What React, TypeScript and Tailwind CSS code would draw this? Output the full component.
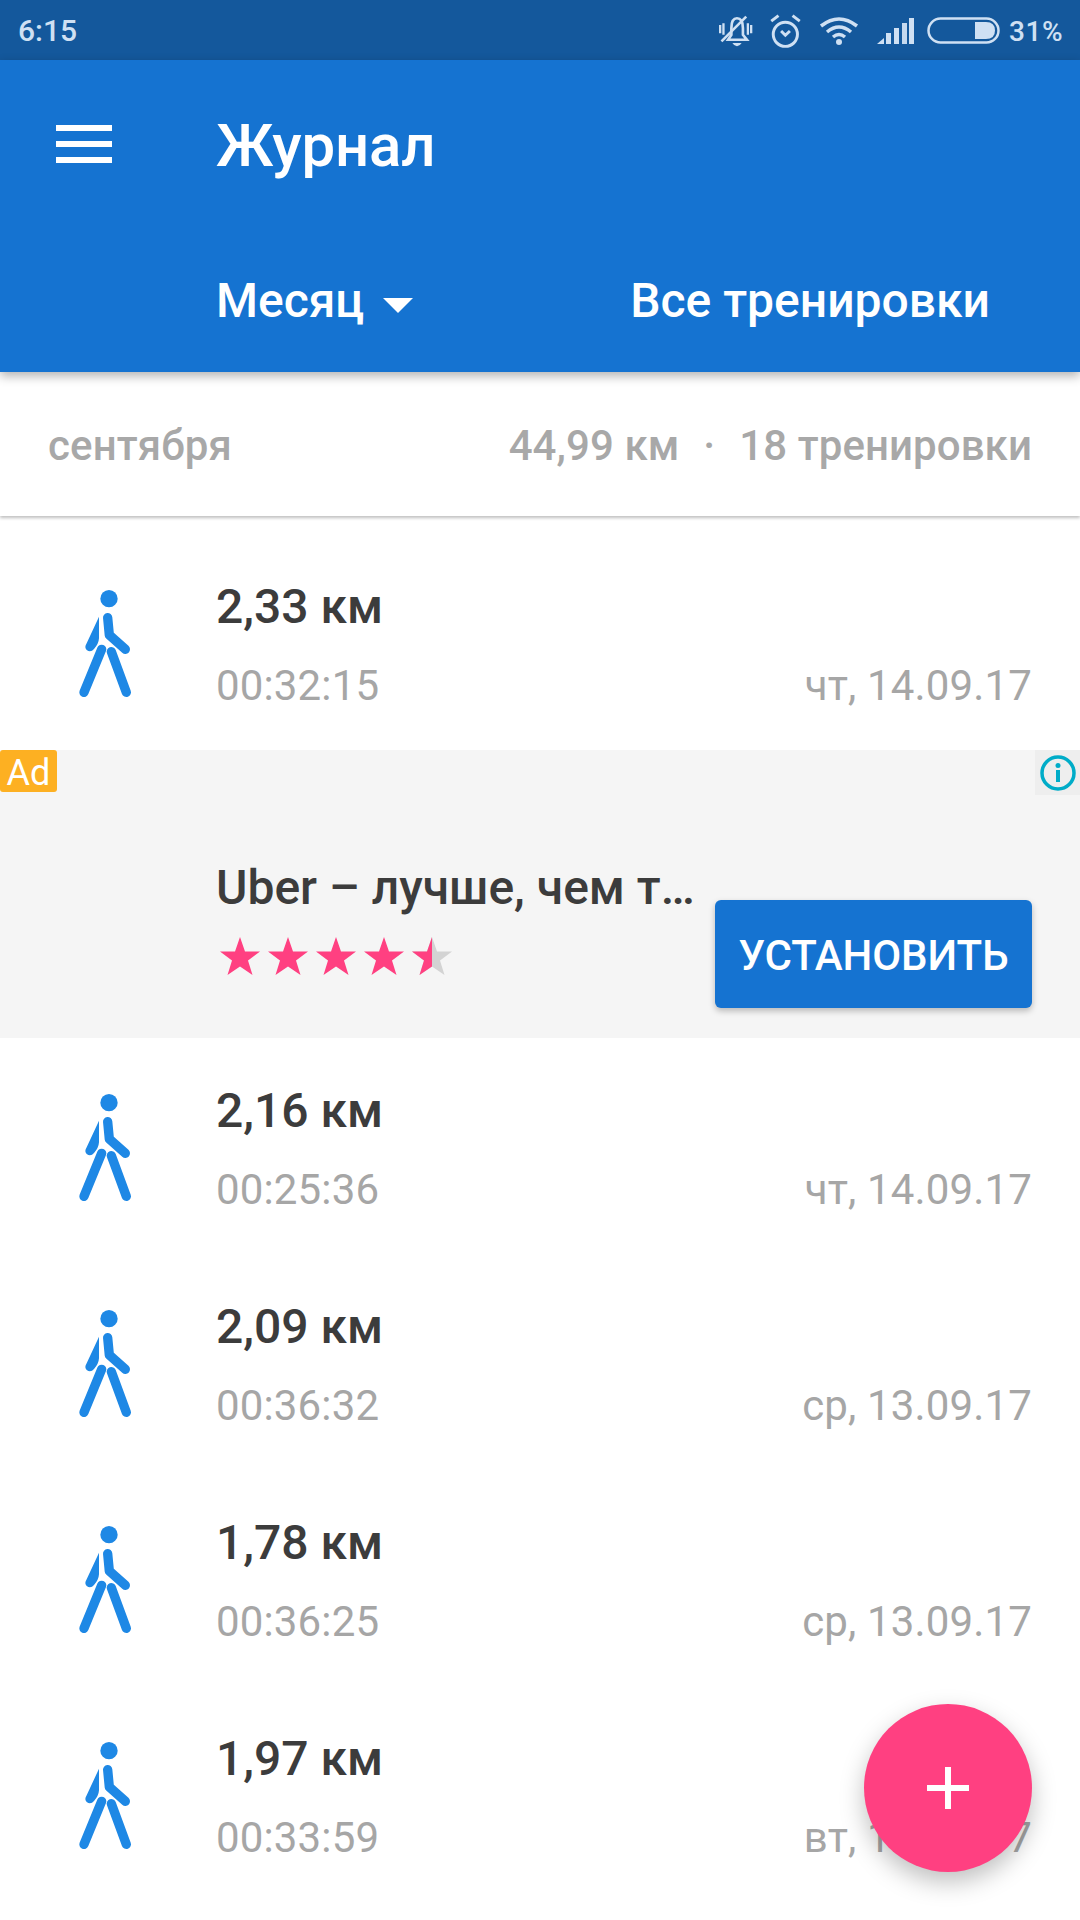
const workouts = [
  { dist: '2,16 км', time: '00:25:36', date: 'чт, 14.09.17' },
  { dist: '2,09 км', time: '00:36:32', date: 'ср, 13.09.17' },
  { dist: '1,78 км', time: '00:36:25', date: 'ср, 13.09.17' },
  { dist: '1,97 км', time: '00:33:59', date: 'вт, 12.09.17' },
]

const STAR = '20,0 25,14.5 40,14.5 28,23.5 32.5,38 20,29.5 7.5,38 12,23.5 0,14.5 15,14.5'

function WalkerIcon() {
  return (
    <svg width="120" height="140" viewBox="0 0 360 420" className="shrink-0">
      <circle cx="177" cy="86" r="26" fill="#1E88E5" />
      <path d="M173 143 L178 195 L226 238" fill="none" stroke="#1E88E5" strokeWidth="28" strokeLinecap="round" strokeLinejoin="round" />
      <path d="M147 140 L147 205 Q146 222 132 237 Q122 249 110 240 Q102 232 110 220 Z" fill="#1E88E5" />
      <path d="M155 238 L102 367" fill="none" stroke="#1E88E5" strokeWidth="28" strokeLinecap="round" />
      <path d="M184 245 L229 367" fill="none" stroke="#1E88E5" strokeWidth="28" strokeLinecap="round" />
    </svg>
  )
}

function Row({ dist, time, date }: { dist: string; time: string; date: string }) {
  return (
    <div className="flex h-[216px] items-start pl-[50px] pr-[48px] pt-[35px]">
      <WalkerIcon />
      <div className="ml-[46px] flex-1">
        <div className="mt-[7px] h-[60px] text-[48px] leading-[60px] font-medium text-[#3c3c3c]">{dist}</div>
        <div className="mt-[19px] flex h-[60px] items-center justify-between text-[42px] leading-[60px] tracking-[0.15px] text-[#a6a6a6]">
          <span>{time}</span>
          <span>{date}</span>
        </div>
      </div>
    </div>
  )
}

function StatusIcons() {
  const c = '#CFE0F3'
  return (
    <div className="flex items-center pt-[1px]">
      {/* muted bell */}
      <svg width="35" height="32" viewBox="55 25 105 97" fill="none" stroke={c} strokeWidth="8">
        <path d="M85 100 L95 85 V65 Q95 35 112 35 Q130 35 130 65 V85 L142 100 Z" />
        <path d="M98 110 H126 Q120 120 112 120 Q104 120 98 110 Z" fill={c} stroke="none" />
        <path d="M61 55 V80 M71 50 V85 M155 55 V80 M145 50 V85" strokeWidth="7" />
        <path d="M140 30 L65 105" />
      </svg>
      {/* alarm */}
      <svg className="ml-[15px]" width="36" height="36" viewBox="205 20 110 110" fill="none" stroke={c} strokeWidth="9">
        <circle cx="258" cy="85" r="37" />
        <path d="M245 75 L258 88 L272 75" />
        <path d="M215 45 L237 28 M302 45 L280 28" />
      </svg>
      {/* wifi */}
      <svg className="ml-[15px]" width="40" height="28" viewBox="0 0 40 28" fill="none" stroke={c} strokeWidth="3.5">
        <path d="M2 9 Q20 -5 38 9" />
        <path d="M8 15 Q20 5 32 15" />
        <path d="M14 20 Q20 15 26 20" />
        <circle cx="20" cy="25" r="3" fill={c} stroke="none" />
      </svg>
      {/* signal */}
      <svg className="ml-[17px]" width="38" height="26" viewBox="0 0 38 26" fill={c}>
        <path d="M1 26 L8 20 V26 Z" />
        <rect x="10" y="15" width="5" height="11" />
        <rect x="18" y="10" width="5" height="16" />
        <rect x="26" y="5" width="5" height="21" opacity="0.95" />
        <rect x="33" y="0" width="5" height="26" />
      </svg>
      {/* battery */}
      <svg className="ml-[13px]" width="74" height="28" viewBox="0 0 74 28" fill="none">
        <rect x="1.5" y="1.5" width="70" height="24" rx="12" stroke={c} strokeWidth="2.5" />
        <path d="M48 5 H59 Q68 5 68 13.5 Q68 22 59 22 H48 Z" fill={c} />
      </svg>
      <span className="ml-[8px] pt-[2px] text-[28px] leading-none font-medium tracking-[0.5px] text-[#CFE0F3]">31%</span>
    </div>
  )
}

export default function App() {
  return (
    <div className="relative h-[1920px] w-[1080px] overflow-hidden bg-white font-['Roboto',sans-serif]">
      {/* status bar */}
      <div className="flex h-[60px] items-center justify-between bg-[#14589C] pl-[18px] pr-[17px]">
        <span className="pt-[2px] text-[30px] leading-none font-medium text-[#CFE0F3]">6:15</span>
        <StatusIcons />
      </div>

      {/* toolbar */}
      <div className="relative z-20 h-[312px] bg-[#1573D1] shadow-[0_4px_10px_rgba(0,0,0,0.3)]">
        <div className="flex h-[172px] items-center">
          <div className="ml-[56px] -mt-[4px] flex w-[56px] flex-col gap-[10px]">
            <div className="h-[6px] bg-white" />
            <div className="h-[6px] bg-white" />
            <div className="h-[6px] bg-white" />
          </div>
          <h1 className="ml-[104px] text-[60px] leading-none font-medium tracking-[-0.2px] text-white">Журнал</h1>
        </div>
        <div className="flex h-[138px] items-center justify-between pl-[216px] pr-[90px] text-[48px] leading-none font-medium text-white">
          <div className="flex items-center">
            <span>Месяц</span>
            <div className="ml-[19px] mt-[8px] h-0 w-0 border-x-[15px] border-t-[15px] border-x-transparent border-t-white" />
          </div>
          <span>Все тренировки</span>
        </div>
      </div>

      {/* month summary */}
      <div className="relative z-10 flex h-[144px] items-center justify-between bg-white pl-[48px] pr-[48px] pt-[4px] text-[42px] leading-none font-medium tracking-[0.08px] text-[#a8a8a8] shadow-[0_2px_3px_rgba(0,0,0,0.25)]">
        <span className="tracking-[0.15px]">сентября</span>
        <div className="flex items-center">
          <span>44,99 км</span>
          <span className="mx-[24px]">·</span>
          <span>18 тренировки</span>
        </div>
      </div>

      <div className="h-[19px]" />
      <Row dist="2,33 км" time="00:32:15" date="чт, 14.09.17" />

      {/* ad */}
      <div className="relative -mt-[1px] mb-[1px] flex h-[288px] items-start bg-[#F5F5F5] pl-[216px] pr-[48px]">
        <div className="absolute left-0 top-0 flex h-[42px] w-[57px] items-center justify-center rounded-[3px] bg-[#FDB022] pt-[3px] text-[36px] leading-none text-white">
          Ad
        </div>
        <div className="absolute right-0 top-0 flex h-[45px] w-[45px] items-center justify-center bg-[#EEEEEE]">
          <svg width="36" height="36" viewBox="0 0 36 36" fill="none">
            <circle cx="18" cy="18" r="16" stroke="#00ACC8" strokeWidth="3.5" />
            <circle cx="18" cy="10.5" r="2.5" fill="#00ACC8" />
            <rect x="16" y="15" width="4" height="12" fill="#00ACC8" />
          </svg>
        </div>
        <div className="mt-[108px] w-[499px]">
          <div className="whitespace-nowrap text-[48px] leading-[60px] font-medium text-[#3c3c3c]">Uber – лучше, чем т…</div>
          <div className="ml-[4px] mt-[19px] flex gap-[8px]">
            {[0, 1, 2, 3].map((i) => (
              <svg key={i} width="40" height="38" viewBox="0 0 40 38">
                <polygon points={STAR} fill="#FF4081" />
              </svg>
            ))}
            <svg width="40" height="38" viewBox="0 0 40 38">
              <polygon points={STAR} fill="#D3D3D3" />
              <polygon points="20,0 20,29.5 7.5,38 12,23.5 0,14.5 15,14.5" fill="#FF4081" />
            </svg>
          </div>
        </div>
        <button className="mt-[150px] flex h-[108px] w-[317px] items-center justify-center rounded-[6px] bg-[#1573D1] pt-[3px] text-[42px] leading-none font-medium tracking-[-0.1px] text-white shadow-[0_3px_6px_rgba(0,0,0,0.25)]">
          УСТАНОВИТЬ
        </button>
      </div>

      {workouts.map((w) => (
        <Row key={w.dist} {...w} />
      ))}

      {/* fab */}
      <button className="absolute bottom-[48px] right-[48px] z-30 flex h-[168px] w-[168px] items-center justify-center rounded-full bg-[#FF4081] shadow-[0_10px_24px_rgba(0,0,0,0.25)]">
        <svg width="42" height="42" viewBox="0 0 42 42" fill="#fff">
          <rect x="18" y="0" width="6" height="42" />
          <rect x="0" y="18" width="42" height="6" />
        </svg>
      </button>
    </div>
  )
}
